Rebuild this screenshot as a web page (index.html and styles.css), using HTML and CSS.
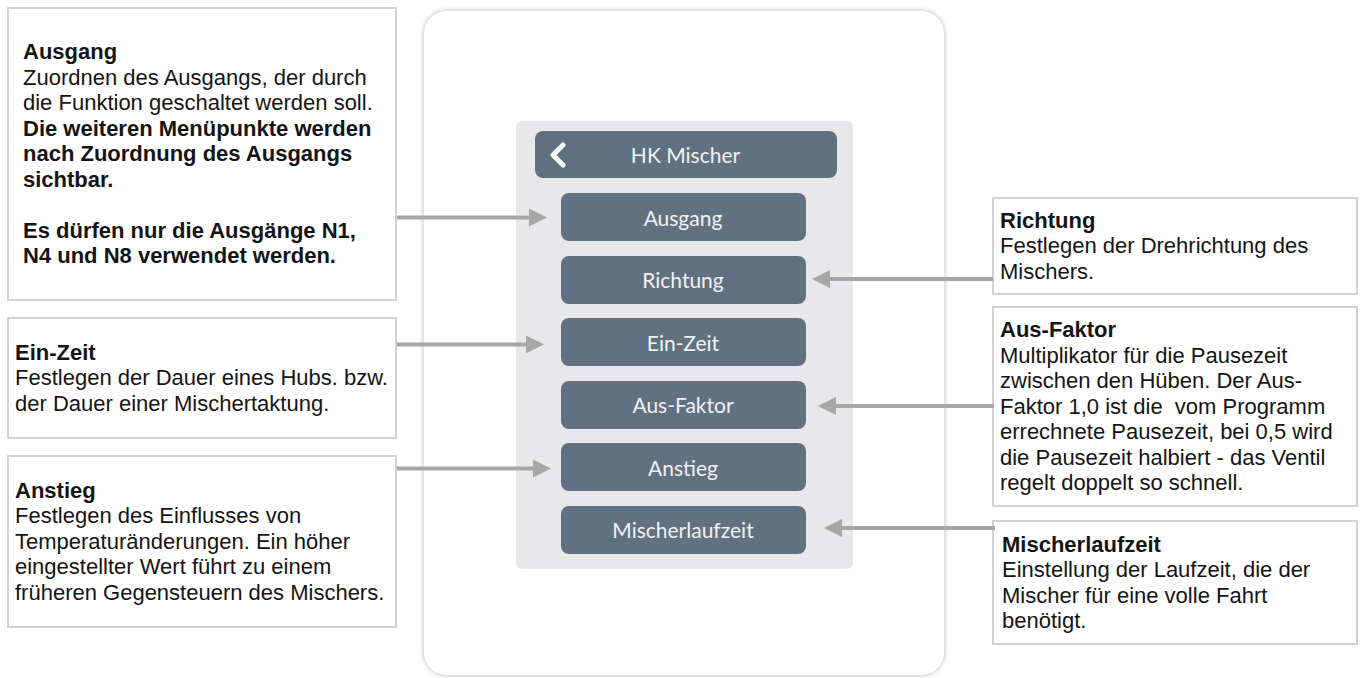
FILE: index.html
```html
<!DOCTYPE html>
<html lang="de">
<head>
    <meta charset="UTF-8">
    <meta name="viewport" content="width=device-width, initial-scale=1.0">
    <title>HK Mischer - Menü</title>
    <link rel="stylesheet" href="styles.css">
</head>
<body>
    <div class="page">
        <div class="notes notes-left">
            <div class="note note-ausgang">
                <p>
                    <b>Ausgang</b><br>
                    Zuordnen des Ausgangs, der durch<br>
                    die Funktion geschaltet werden soll.<br>
                    <b>Die weiteren Menüpunkte werden<br>
                    nach Zuordnung des Ausgangs<br>
                    sichtbar.</b><br>
                    <br>
                    <b>Es dürfen nur die Ausgänge N1,<br>
                    N4 und N8 verwendet werden.</b>
                </p>
            </div>
            <div class="note note-einzeit">
                <p>
                    <b>Ein-Zeit</b><br>
                    Festlegen der Dauer eines Hubs. bzw.<br>
                    der Dauer einer Mischertaktung.
                </p>
            </div>
            <div class="note note-anstieg">
                <p>
                    <b>Anstieg</b><br>
                    Festlegen des Einflusses von<br>
                    Temperaturänderungen. Ein höher<br>
                    eingestellter Wert führt zu einem<br>
                    früheren Gegensteuern des Mischers.
                </p>
            </div>
        </div>

        <div class="device">
            <div class="screen">
                <div class="screen-header">
                    <svg class="back" width="20" height="26" viewBox="0 0 20 26">
                        <polyline points="15,3 5,13 15,23" fill="none" stroke="#ffffff" stroke-width="5" stroke-linecap="round" stroke-linejoin="round"/>
                    </svg>
                    <span class="screen-title">HK Mischer</span>
                </div>
                <div class="menu-item">Ausgang</div>
                <div class="menu-item">Richtung</div>
                <div class="menu-item">Ein-Zeit</div>
                <div class="menu-item">Aus-Faktor</div>
                <div class="menu-item">Anstieg</div>
                <div class="menu-item">Mischerlaufzeit</div>
            </div>
        </div>

        <div class="notes notes-right">
            <div class="note note-richtung">
                <p>
                    <b>Richtung</b><br>
                    Festlegen der Drehrichtung des<br>
                    Mischers.
                </p>
            </div>
            <div class="note note-faktor">
                <p>
                    <b>Aus-Faktor</b><br>
                    Multiplikator für die Pausezeit<br>
                    zwischen den Hüben. Der Aus-<br>
                    Faktor 1,0 ist die&nbsp; vom Programm<br>
                    errechnete Pausezeit, bei 0,5 wird<br>
                    die Pausezeit halbiert - das Ventil<br>
                    regelt doppelt so schnell.
                </p>
            </div>
            <div class="note note-laufzeit">
                <p>
                    <b>Mischerlaufzeit</b><br>
                    Einstellung der Laufzeit, die der<br>
                    Mischer für eine volle Fahrt<br>
                    benötigt.
                </p>
            </div>
        </div>

        <!-- connector arrows between notes and menu items -->
        <svg class="arrows" width="1363" height="678" viewBox="0 0 1363 678">
            <g fill="#a7a7a7" stroke="#a7a7a7" stroke-width="4">
                <line x1="397" y1="217.5" x2="531" y2="217.5"/>
                <polygon stroke="none" points="547,217.5 529,208.5 529,226.5"/>
                <line x1="397" y1="344.5" x2="528" y2="344.5"/>
                <polygon stroke="none" points="544,344.5 526,335.5 526,353.5"/>
                <line x1="397" y1="468.5" x2="535" y2="468.5"/>
                <polygon stroke="none" points="551,468.5 533,459.5 533,477.5"/>

                <line x1="993" y1="279" x2="828" y2="279"/>
                <polygon stroke="none" points="812,279 830,270 830,288"/>
                <line x1="994" y1="406" x2="834" y2="406"/>
                <polygon stroke="none" points="818,406 836,397 836,415"/>
                <line x1="995" y1="528" x2="840" y2="528"/>
                <polygon stroke="none" points="824,528 842,519 842,537"/>
            </g>
        </svg>
    </div>
</body>
</html>
```

FILE: styles.css
```css
body {
    margin: 0;
    background-color: #ffffff;
    font-family: "Liberation Sans", Arial, sans-serif;
    color: #141414;
}
.page {
    position: relative;
    display: flex;
    align-items: flex-start;
    width: 1363px;
    height: 678px;
    padding: 7px 0 0 7px;
    box-sizing: border-box;
    overflow: hidden;
}
.notes {
    display: flex;
    flex-direction: column;
}
.notes-left {
    width: 390px;
    gap: 16px;
}
.notes-right {
    width: 366px;
    margin-top: 190px;
    margin-left: 46px;
}
.note {
    display: flex;
    flex-direction: column;
    justify-content: center;
    border: 2px solid #d2d2d2;
    box-sizing: border-box;
    background: white;
}
.note p {
    margin: 0;
    font-size: 22px;
    line-height: 25.5px;
    white-space: nowrap;
}
.note-ausgang {
    height: 294px;
    padding-left: 14px;
}
.note-einzeit {
    height: 122px;
    padding-left: 6px;
}
.note-anstieg {
    height: 173px;
    padding-left: 6px;
}
.note-richtung {
    height: 98px;
    padding-left: 6px;
}
.note-faktor {
    height: 201px;
    margin-top: 11px;
    padding-left: 6px;
}
.note-laufzeit {
    height: 125px;
    margin-top: 13px;
    padding-left: 8px;
}
.device {
    width: 524px;
    height: 668px;
    margin-top: 2px;
    margin-left: 25px;
    padding-top: 110px;
    border: 2px solid #e4e4e4;
    border-radius: 25px;
    box-shadow: 0 0 4px rgba(0,0,0,0.12);
    box-sizing: border-box;
}
.screen {
    display: flex;
    flex-direction: column;
    align-items: center;
    width: 337px;
    margin: 0 auto;
    padding: 10px 0 15px;
    background-color: #e8e8ea;
    border-radius: 6px;
    box-sizing: border-box;
}
.screen-header {
    display: grid;
    grid-template-columns: 40px 1fr 40px;
    align-items: center;
    width: 302px;
    height: 47px;
    margin-left: 3px;
    background-color: #617181;
    border-radius: 8px;
}
.back {
    margin-left: 13px;
}
.screen-title {
    text-align: center;
    color: #f2f2f2;
    font-family: Lato, "Open Sans", sans-serif;
    font-size: 21px;
}
.menu-item {
    display: flex;
    align-items: center;
    justify-content: center;
    width: 245px;
    height: 48px;
    margin-top: 14.5px;
    margin-right: 2px;
    background-color: #617181;
    border-radius: 8px;
    color: #f2f2f2;
    font-family: Lato, "Open Sans", sans-serif;
    font-size: 21px;
}
.screen-header + .menu-item {
    margin-top: 15px;
}
.arrows {
    position: absolute;
    top: 0;
    left: 0;
    pointer-events: none;
}
```
